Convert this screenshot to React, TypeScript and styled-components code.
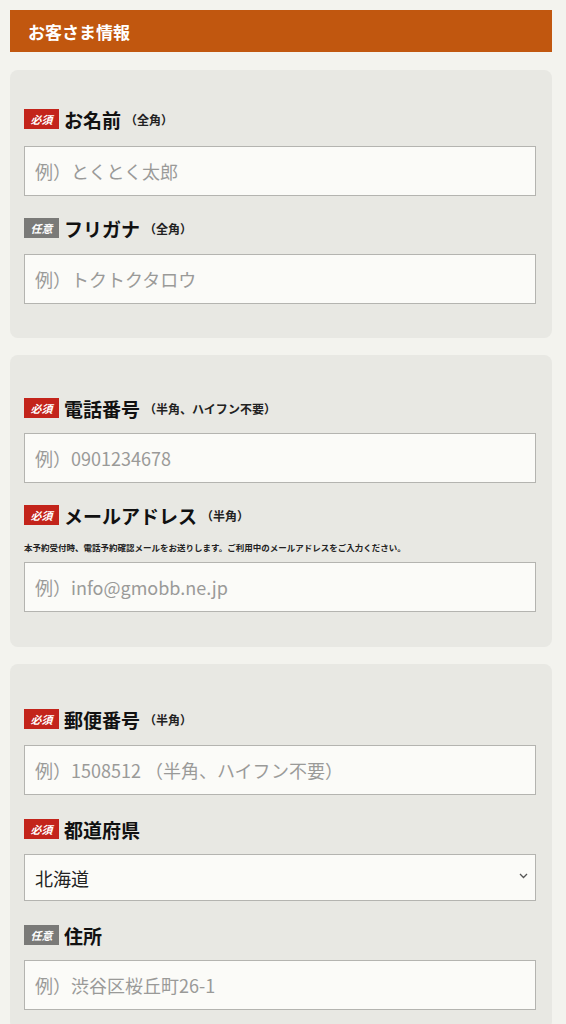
import React from "react";
import styled, { createGlobalStyle } from "styled-components";

const GlobalStyle = createGlobalStyle`
  body {
    margin: 0;
    background: #f3f3ee;
    font-family: "Noto Sans CJK JP", "Noto Sans", sans-serif;
  }
`;

const Page = styled.div`
  padding: 10px 14px 0 10px;
  display: flex;
  flex-direction: column;
  gap: 17px;
`;

const Header = styled.div`
  background: #c1570f;
  color: #fff;
  font-size: 17px;
  font-weight: 700;
  height: 42px;
  display: flex;
  align-items: center;
  padding-left: 18px;
  margin-bottom: 1px;
`;

const Card = styled.div<{ $top: number; $bottom: number; $spacing: number }>`
  background: #e8e8e3;
  border-radius: 8px;
  padding: ${(p) => p.$top}px 16px ${(p) => p.$bottom}px 14px;
  display: flex;
  flex-direction: column;
  gap: ${(p) => p.$spacing}px;
`;

const Field = styled.div`
  display: flex;
  flex-direction: column;
`;

const LabelRow = styled.div<{ $gap: number }>`
  display: flex;
  align-items: center;
  height: 22px;
  margin-bottom: ${(p) => p.$gap}px;
`;

const Badge = styled.span<{ $required: boolean }>`
  display: inline-flex;
  align-items: center;
  justify-content: center;
  width: 35px;
  height: 20px;
  margin-right: 5px;
  background: ${(p) => (p.$required ? "#c3241b" : "#7a7a78")};
  color: #fff;
  font-size: 11px;
  font-weight: 700;
  font-style: italic;
`;

const LabelText = styled.span`
  font-size: 19px;
  font-weight: 700;
  color: #111;
`;

const Sub = styled.span`
  font-size: 12px;
  font-weight: 700;
  color: #222;
  margin-left: 4px;
`;

const Note = styled.div`
  font-size: 8.5px;
  font-weight: 700;
  color: #222;
  margin: -1px 0 9px 0;
  white-space: nowrap;
`;

const Input = styled.input`
  box-sizing: border-box;
  height: 50px;
  width: 100%;
  border: 1.5px solid #b4b4b0;
  background: #fbfbf8;
  padding: 0 10px;
  font-family: inherit;
  font-size: 18px;
  color: #333;
  outline: none;
  &::placeholder {
    color: #9a9a98;
  }
`;

const SelectWrap = styled.div`
  position: relative;
`;

const Select = styled.select`
  box-sizing: border-box;
  appearance: none;
  height: 47px;
  width: 100%;
  border: 1.5px solid #b4b4b0;
  background: #fbfbf8;
  padding: 0 10px;
  font-family: inherit;
  font-size: 18px;
  color: #222;
  outline: none;
`;

const Chevron = styled.svg`
  position: absolute;
  right: 8px;
  top: 19px;
  pointer-events: none;
`;

type FieldProps = {
  required: boolean;
  label: string;
  sub?: string;
  note?: string;
  gap?: number;
  children: React.ReactNode;
};

const FormField = ({ required, label, sub, note, gap = 15, children }: FieldProps) => (
  <Field>
    <LabelRow $gap={note ? 16 : gap}>
      <Badge $required={required}>{required ? "必須" : "任意"}</Badge>
      <LabelText>{label}</LabelText>
      {sub && <Sub>{sub}</Sub>}
    </LabelRow>
    {note && <Note>{note}</Note>}
    {children}
  </Field>
);

export default function App() {
  return (
    <Page>
      <GlobalStyle />
      <Header>お客さま情報</Header>

      <Card $top={38} $bottom={34} $spacing={21}>
        <FormField required label="お名前" sub="（全角）" gap={16}>
          <Input placeholder="例）とくとく太郎" />
        </FormField>
        <FormField required={false} label="フリガナ" sub="（全角）">
          <Input placeholder="例）トクトクタロウ" />
        </FormField>
      </Card>

      <Card $top={42} $bottom={35} $spacing={21}>
        <FormField required label="電話番号" sub="（半角、ハイフン不要）" gap={14}>
          <Input placeholder="例）0901234678" />
        </FormField>
        <FormField
          required
          label="メールアドレス"
          sub="（半角）"
          note="本予約受付時、電話予約確認メールをお送りします。ご利用中のメールアドレスをご入力ください。"
        >
          <Input placeholder="例）info@gmobb.ne.jp" />
        </FormField>
      </Card>

      <Card $top={44} $bottom={20} $spacing={23}>
        <FormField required label="郵便番号" sub="（半角）">
          <Input placeholder="例）1508512 （半角、ハイフン不要）" />
        </FormField>
        <FormField required label="都道府県" gap={14}>
          <SelectWrap>
            <Select defaultValue="北海道">
              <option>北海道</option>
              <option>青森県</option>
              <option>東京都</option>
            </Select>
            <Chevron width="9" height="6" viewBox="0 0 9 6">
              <path d="M1 1l3.5 3.5L8 1" stroke="#555" strokeWidth="1.3" fill="none" />
            </Chevron>
          </SelectWrap>
        </FormField>
        <FormField required={false} label="住所" gap={14}>
          <Input placeholder="例）渋谷区桜丘町26-1" />
        </FormField>
      </Card>
    </Page>
  );
}
